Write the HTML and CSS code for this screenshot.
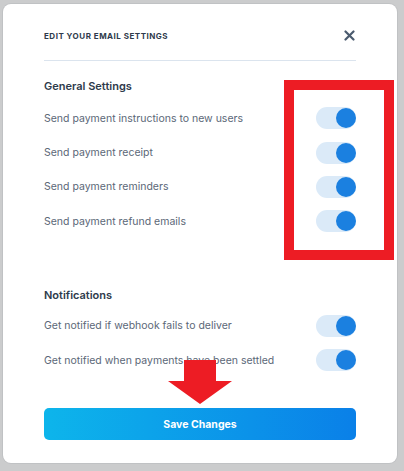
FILE: index.html
```html
<!DOCTYPE html>
<html lang="en">
<head>
    <meta charset="UTF-8">
    <meta name="viewport" content="width=device-width, initial-scale=1.0">
    <title>Edit your email settings</title>
    <link rel="stylesheet" href="styles.css">
</head>
<body>
    <div class="modal">
        <div class="modal-header">
            <h1>Edit your email settings</h1>
            <button class="close" type="button" aria-label="Close">
                <svg width="11" height="11" viewBox="0 0 11 11"><path d="M1.5 1.5 L9.5 9.5 M9.5 1.5 L1.5 9.5" stroke="#4a5a6e" stroke-width="2.2" stroke-linecap="round"/></svg>
            </button>
        </div>

        <div class="section">
            <h2>General Settings</h2>
            <label class="row"><span>Send payment instructions to new users</span><input type="checkbox" class="toggle" checked></label>
            <label class="row"><span>Send payment receipt</span><input type="checkbox" class="toggle" checked></label>
            <label class="row"><span>Send payment reminders</span><input type="checkbox" class="toggle" checked></label>
            <label class="row"><span>Send payment refund emails</span><input type="checkbox" class="toggle" checked></label>
        </div>

        <div class="section notifications">
            <h2>Notifications</h2>
            <label class="row"><span>Get notified if webhook fails to deliver</span><input type="checkbox" class="toggle" checked></label>
            <label class="row"><span>Get notified when payments have been settled</span><input type="checkbox" class="toggle" checked></label>
        </div>

        <button class="save" type="button">Save Changes</button>

        <!-- annotation overlay -->
        <div class="highlight"></div>
        <svg class="arrow" width="64" height="44" viewBox="0 0 64 44"><polygon points="16,0 48,0 48,21 64,21 32,44 0,21 16,21" fill="#ed1c24"/></svg>
    </div>
</body>
</html>
```

FILE: styles.css
```css
html, body {
    margin: 0;
    padding: 0;
}

body {
    background: #cbcccd;
    font-family: Inter, "Noto Sans", sans-serif;
    width: 404px;
    height: 471px;
    overflow: hidden;
}

.modal {
    position: relative;
    box-sizing: border-box;
    width: 394px;
    height: 459px;
    margin: 4px 0 0 3px;
    padding: 23px 41px 23px 41px;
    background: #fff;
    border-radius: 8px;
    box-shadow: 0 0 0 1px #c0c2c4;
}

.modal-header {
    display: flex;
    align-items: center;
    justify-content: space-between;
    height: 17px;
    padding-bottom: 16px;
    border-bottom: 1px solid #dbe4ee;
}

.modal-header h1 {
    margin: 0;
    font-size: 8px;
    font-weight: 700;
    text-transform: uppercase;
    letter-spacing: 0.5px;
    color: #2e3a4b;
}

.close {
    border: none;
    background: none;
    padding: 0;
    width: 11px;
    height: 11px;
    display: flex;
    margin-right: 1px;
}

.section {
    margin-top: 17px;
}

.section h2 {
    margin: 0 0 7px;
    height: 16px;
    line-height: 16px;
    font-size: 11px;
    font-weight: 600;
    color: #2e3a4b;
}

.notifications {
    margin-top: 48px;
}

.notifications h2 {
    margin-bottom: 6px;
}

.row {
    display: flex;
    align-items: center;
    justify-content: space-between;
    height: 34.4px;
    font-size: 10.5px;
    color: #5b6777;
}

.toggle {
    appearance: none;
    margin: 0;
    position: relative;
    width: 40px;
    height: 22px;
    border-radius: 11px;
    background: #dbeaf8;
}

.toggle::after {
    content: "";
    position: absolute;
    top: 1px;
    right: 0;
    width: 20px;
    height: 20px;
    border-radius: 50%;
    background: #1b80e0;
}

.save {
    display: block;
    width: 100%;
    height: 32px;
    margin-top: 31px;
    border: none;
    border-radius: 5px;
    background: linear-gradient(90deg, #0db5eb, #0a80e8);
    color: #fff;
    font-family: inherit;
    font-size: 10.5px;
    font-weight: 700;
}

.highlight {
    position: absolute;
    left: 281px;
    top: 76px;
    width: 90px;
    height: 160px;
    border: 10px solid #ed1c24;
}

.arrow {
    position: absolute;
    left: 165px;
    top: 356px;
}
```
